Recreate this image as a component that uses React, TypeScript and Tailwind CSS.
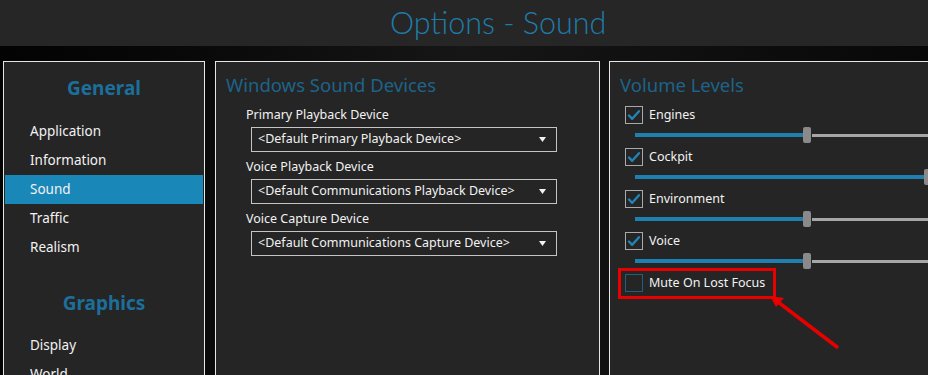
import React from "react";

const font = { fontFamily: '"Noto Sans", "Open Sans", sans-serif' };

function Check({ checked }: { checked: boolean }) {
  return (
    <div
      className={
        "w-[18px] h-[18px] shrink-0 border flex items-center justify-center " +
        (checked ? "border-[#a9a9a9]" : "border-[#235d7a]")
      }
    >
      {checked && (
        <svg width="14" height="12" viewBox="0 0 14 12">
          <path d="M2 6.5 L5.2 9.8 L12 2.2" fill="none" stroke="#2283b6" strokeWidth="2.4" strokeLinecap="round" strokeLinejoin="round" />
        </svg>
      )}
    </div>
  );
}

function Slider({ value }: { value: number }) {
  const len = 290;
  const pos = Math.round(len * value);
  return (
    <div className="relative h-[16px] ml-[10px] w-[300px]">
      <div className="absolute left-0 top-[6px] h-[4px] bg-[#1f7fb0]" style={{ width: pos }} />
      <div className="absolute top-[7px] h-[3px] bg-[#a6a6a6] right-0" style={{ left: pos + 8 }} />
      <div className="absolute top-0 h-[16px] w-[8px] rounded-[2px] bg-[#8a8a8a]" style={{ left: pos - 1 }} />
    </div>
  );
}

function Select({ text }: { text: string }) {
  return (
    <div className="ml-[35px] w-[306px] h-[25px] border border-[#c4c4c4] flex items-center justify-between pl-[6px] pr-[10px] text-[12.5px] text-[#f2f2f2]">
      <span>{text}</span>
      <svg width="7" height="5" viewBox="0 0 7 5">
        <path d="M0 0 H7 L3.5 5 Z" fill="#f2f2f2" />
      </svg>
    </div>
  );
}

export default function App() {
  const items = ["Application", "Information", "Sound", "Traffic", "Realism"];
  const vols: [string, number][] = [
    ["Engines", 0.583],
    ["Cockpit", 1],
    ["Environment", 0.583],
    ["Voice", 0.583],
  ];
  return (
    <div className="relative w-[928px] h-[375px] overflow-hidden bg-[#0a0a0a]" style={font}>
      <div className="h-[46px] bg-[#262626] flex items-center">
        <div
          className="pl-[390px] text-[30.5px] font-light text-[#1f7caa] leading-none pb-[2px]"
          style={{ fontFamily: '"Lato", "Noto Sans", sans-serif' }}
        >
          Options - Sound
        </div>
      </div>
      <div className="h-[329px] bg-linear-to-r from-[#030303] via-[#161616] to-[#080808] flex pt-[15px] pl-[3px]">
        {/* Left nav */}
        <div className="w-[202px] h-[330px] shrink-0 border border-[#e6e6e6] bg-[#252525] p-[1px]">
          <div className="h-[54px] pt-[13px] leading-[24px] text-center text-[19px] font-bold text-[#1c6f9b]">
            General
          </div>
          <div>
            {items.map((it) => (
              <div
                key={it}
                className={
                  "h-[29px] flex items-center pl-[25px] text-[13.5px] text-[#f2f2f2] " +
                  (it === "Sound" ? "bg-[#1a87b9]" : "")
                }
              >
                {it}
              </div>
            ))}
          </div>
          <div className="mt-[29px] h-[24px] leading-[24px] text-center text-[19px] font-bold text-[#1c6f9b]">
            Graphics
          </div>
          <div className="mt-[16px]">
            {["Display", "World"].map((it) => (
              <div key={it} className="h-[29px] flex items-center pl-[25px] text-[13.5px] text-[#f2f2f2]">
                {it}
              </div>
            ))}
          </div>
        </div>

        {/* Middle */}
        <div className="ml-[10px] w-[385px] h-[330px] shrink-0 border border-[#e6e6e6] bg-[#252525]">
          <div className="pt-[11px] pl-[10px] h-[35px] leading-[24px] text-[18.5px] text-[#1d6389]">
            Windows Sound Devices
          </div>
          <div className="mt-[9px] flex flex-col">
            {[
              ["Primary Playback Device", "<Default Primary Playback Device>"],
              ["Voice Playback Device", "<Default Communications Playback Device>"],
              ["Voice Capture Device", "<Default Communications Capture Device>"],
            ].map(([l, v]) => (
              <div key={l} className="mb-[6px]">
                <div className="h-[18px] leading-[18px] pl-[30px] text-[12.5px] text-[#f2f2f2] mb-[3px]">{l}</div>
                <Select text={v} />
              </div>
            ))}
          </div>
        </div>

        {/* Right */}
        <div className="ml-[9px] w-[340px] h-[330px] shrink-0 border border-[#e6e6e6] bg-[#252525]">
          <div className="pt-[11px] pl-[10px] h-[35px] leading-[24px] text-[18.5px] text-[#1d6389]">
            Volume Levels
          </div>
          <div className="mt-[9px] pl-[15px]">
            {vols.map(([l, v]) => (
              <div key={l} className="mb-[5px]">
                <div className="flex items-center gap-[6px] h-[18px] mb-[3px]">
                  <Check checked />
                  <span className="text-[12.5px] text-[#f2f2f2]">{l}</span>
                </div>
                <Slider value={v} />
              </div>
            ))}
            <div className="flex items-center gap-[6px] h-[18px]">
              <Check checked={false} />
              <span className="text-[12.5px] text-[#f2f2f2]">Mute On Lost Focus</span>
            </div>
          </div>
        </div>
      </div>

      {/* Annotation */}
      <div className="absolute left-[618px] top-[268px] w-[158px] h-[31px] border-[3px] border-[#e60000]" />
      <svg className="absolute left-0 top-0" width="928" height="375" viewBox="0 0 928 375">
        <line x1="837" y1="347" x2="778" y2="302" stroke="#e60000" strokeWidth="3.5" strokeLinecap="round" />
        <path d="M770 296 L784 298 L776 307 Z" fill="#e60000" />
      </svg>
    </div>
  );
}
